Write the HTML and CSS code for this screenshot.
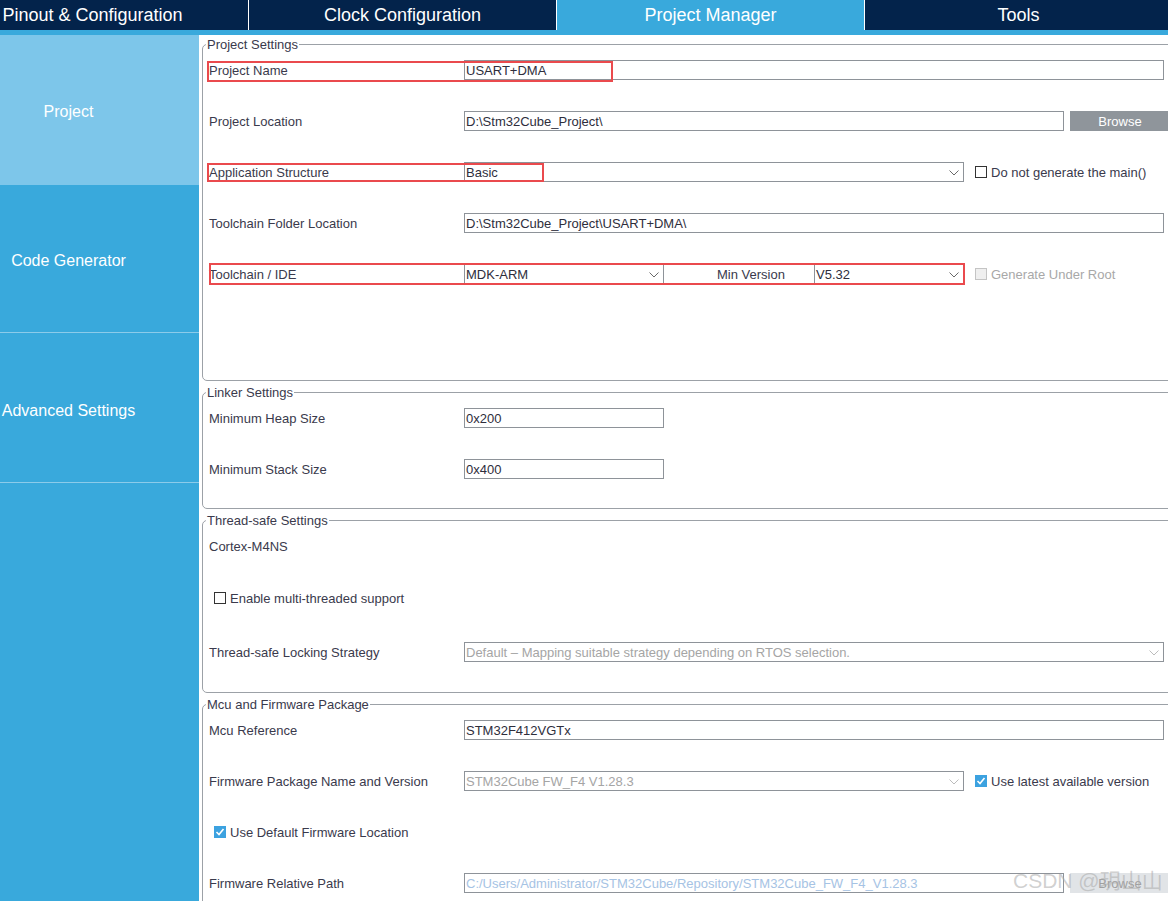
FILE: index.html
```html
<!doctype html>
<html>

<head>
	<meta charset="UTF-8">
	<title>Project Manager</title>
	<link rel="stylesheet" href="styles.css">
</head>

<body>

	<!-- top tabs -->
	<header class="tabs">
		<div class="tab first">Pinout &amp; Configuration</div>
		<div class="tab">Clock Configuration</div>
		<div class="tab active">Project Manager</div>
		<div class="tab">Tools</div>
	</header>

	<div class="layout">
		<!-- left menu -->
		<nav class="side">
			<div class="side-item current">Project</div>
			<div class="side-item gen">Code Generator</div>
			<div class="side-item adv">Advanced Settings</div>
		</nav>

		<main class="panel">

			<fieldset class="group g-project">
				<legend>Project Settings</legend>
				<div class="rows">
					<div class="row">
						<span class="label">Project Name</span>
						<span class="field w700">USART+DMA</span>
						<span class="mark mark-name"></span>
					</div>
					<div class="row">
						<span class="label">Project Location</span>
						<span class="field w600">D:\Stm32Cube_Project\</span>
						<span class="btn">Browse</span>
					</div>
					<div class="row">
						<span class="label">Application Structure</span>
						<span class="field select w500">Basic
							<svg class="chev" width="10" height="6" viewBox="0 0 10 6"><polyline points="0.5,0.5 5,5 9.5,0.5" /></svg>
						</span>
						<span class="opt"><span class="check"></span>Do not generate the main()</span>
						<span class="mark mark-app"></span>
					</div>
					<div class="row">
						<span class="label">Toolchain Folder Location</span>
						<span class="field w700">D:\Stm32Cube_Project\USART+DMA\</span>
					</div>
					<div class="row">
						<span class="label">Toolchain / IDE</span>
						<span class="field select w200">MDK-ARM
							<svg class="chev" width="10" height="6" viewBox="0 0 10 6"><polyline points="0.5,0.5 5,5 9.5,0.5" /></svg>
						</span>
						<span class="minver">Min Version</span>
						<span class="field select w150">V5.32
							<svg class="chev" width="10" height="6" viewBox="0 0 10 6"><polyline points="0.5,0.5 5,5 9.5,0.5" /></svg>
						</span>
						<span class="opt off"><span class="check"></span>Generate Under Root</span>
						<span class="mark mark-ide"></span>
					</div>
				</div>
			</fieldset>

			<fieldset class="group g-linker">
				<legend>Linker Settings</legend>
				<div class="rows">
					<div class="row">
						<span class="label">Minimum Heap Size</span>
						<span class="field w200">0x200</span>
					</div>
					<div class="row">
						<span class="label">Minimum Stack Size</span>
						<span class="field w200">0x400</span>
					</div>
				</div>
			</fieldset>

			<fieldset class="group g-thread">
				<legend>Thread-safe Settings</legend>
				<div class="rows">
					<div class="row">
						<span class="label">Cortex-M4NS</span>
					</div>
					<div class="row r-multi">
						<span class="opt first-opt"><span class="check"></span>Enable multi-threaded support</span>
					</div>
					<div class="row r-lock">
						<span class="label">Thread-safe Locking Strategy</span>
						<span class="field select w700 dis">Default – Mapping suitable strategy depending on RTOS selection.
							<svg class="chev light" width="10" height="6" viewBox="0 0 10 6"><polyline points="0.5,0.5 5,5 9.5,0.5" /></svg>
						</span>
					</div>
				</div>
			</fieldset>

			<fieldset class="group g-mcu">
				<legend>Mcu and Firmware Package</legend>
				<div class="rows">
					<div class="row">
						<span class="label">Mcu Reference</span>
						<span class="field w700">STM32F412VGTx</span>
					</div>
					<div class="row">
						<span class="label">Firmware Package Name and Version</span>
						<span class="field select w500 dis">STM32Cube FW_F4 V1.28.3
							<svg class="chev light" width="10" height="6" viewBox="0 0 10 6"><polyline points="0.5,0.5 5,5 9.5,0.5" /></svg>
						</span>
						<span class="opt"><span class="check on"><svg width="10" height="10" viewBox="0 0 10 10"><polyline points="1.5,5 4,7.5 8.5,2" /></svg></span>Use latest available version</span>
					</div>
					<div class="row">
						<span class="opt first-opt"><span class="check on"><svg width="10" height="10" viewBox="0 0 10 10"><polyline points="1.5,5 4,7.5 8.5,2" /></svg></span>Use Default Firmware Location</span>
					</div>
					<div class="row">
						<span class="label">Firmware Relative Path</span>
						<span class="field w600 path">C:/Users/Administrator/STM32Cube/Repository/STM32Cube_FW_F4_V1.28.3</span>
						<span class="btn btn-off">Browse</span>
					</div>
				</div>
			</fieldset>

		</main>
	</div>

	<div class="watermark">CSDN @玥山山</div>

</body>

</html>
```

FILE: styles.css
```css
body {
	margin: 0;
	padding: 0;
	width: 1168px;
	height: 901px;
	overflow: hidden;
	position: relative;
	background: #fff;
	font-family: "Liberation Sans", Arial, sans-serif;
	font-size: 13px;
	color: #3a3a4c;
}

/* tabs */
.tabs {
	display: flex;
	height: 30px;
	background: #03234b;
	border-bottom: 5px solid #39a9dc;
	overflow: hidden;
}

.tab {
	flex: none;
	width: 307px;
	border-right: 1px solid #fff;
	color: #fff;
	font-size: 18px;
	line-height: 31px;
	text-align: center;
	white-space: nowrap;
}

.tab.first {
	width: 311px;
	margin-left: -63px;
}

.tab.active {
	background: #39a9dc;
}

/* layout */
.layout {
	display: flex;
	height: 866px;
}

.side {
	flex: none;
	width: 199px;
	background: #39a9dc;
}

.side-item {
	display: flex;
	align-items: center;
	justify-content: center;
	box-sizing: border-box;
	padding: 5px 62px 0 0;
	color: #fff;
	font-size: 16px;
	white-space: nowrap;
	border-bottom: 1px solid #8ccbea;
}

.side-item.current {
	height: 150px;
	padding-top: 4px;
	background: #7dc6ea;
	border-bottom: none;
}

.gen {
	height: 148px;
}

.adv {
	height: 150px;
	padding-top: 7px;
}

.panel {
	flex: 1;
	padding: 2px 0 0 3px;
	overflow: hidden;
}

/* groups */
.group {
	margin: 0 -10px 4px 0;
	padding: 8px 0 0 0;
	border: 1px solid #9ca1a7;
	border-radius: 5px;
	min-width: 0;
}

.group legend {
	margin-left: 3px;
	padding: 0 1px;
	font-size: 13px;
	line-height: 15px;
	color: #3a3a4c;
}

.g-project {
	padding-bottom: 96px;
}

.g-linker {
	padding-bottom: 29px;
}

.g-thread {
	padding-bottom: 30px;
}

.g-mcu {
	padding-bottom: 40px;
}

.rows {
	display: flex;
	flex-direction: column;
	gap: 31px;
	padding-left: 6px;
}

.row {
	display: flex;
	align-items: center;
	height: 20px;
	position: relative;
	white-space: nowrap;
}

.r-multi {
	margin-top: 1px;
}

.r-lock {
	margin-top: 3px;
}

.label {
	flex: none;
	width: 255px;
}

.field {
	flex: none;
	box-sizing: border-box;
	height: 20px;
	border: 1px solid #8e9399;
	padding: 1px 1px 0;
	line-height: 18px;
	color: #2e2e3c;
	background: #fff;
	overflow: hidden;
	white-space: nowrap;
}

.w700 { width: 700px; }
.w600 { width: 600px; }
.w500 { width: 500px; }
.w200 { width: 200px; }
.w150 { width: 150px; }

.select {
	display: flex;
	align-items: center;
	justify-content: space-between;
	padding-right: 4px;
}

.chev {
	flex: none;
	fill: none;
	stroke: #6a6a6a;
	stroke-width: 1;
}

.chev.light {
	stroke: #bcbcbc;
}

.dis {
	color: #a5a5a5;
}

.path {
	color: #a6c3e4;
}

.minver {
	flex: none;
	box-sizing: border-box;
	width: 150px;
	padding-left: 53px;
}

.btn {
	flex: none;
	width: 100px;
	height: 20px;
	margin-left: 6px;
	background: #8f959b;
	color: #fff;
	text-align: center;
	line-height: 21px;
}

.btn-off {
	background: #e1e4e7;
	color: #a0a0a0;
}

/* checkboxes */
.opt {
	display: flex;
	align-items: center;
	margin-left: 11px;
}

.first-opt {
	margin-left: 5px;
}

.check {
	flex: none;
	display: flex;
	align-items: center;
	justify-content: center;
	box-sizing: border-box;
	width: 12px;
	height: 12px;
	margin-right: 4px;
	border: 1px solid #333;
	background: #fff;
}

.check.on {
	background: #3ca2e0;
	border-color: #3ca2e0;
}

.check svg {
	fill: none;
	stroke: #fff;
	stroke-width: 1.6;
}

.opt.off {
	color: #a8a8a8;
}

.opt.off .check {
	background: #efefef;
	border-color: #c4c4c4;
}

/* red marks over the screenshot */
.mark {
	position: absolute;
	box-sizing: border-box;
	border: 2px solid #ea4a4d;
}

.mark-name {
	left: -2px;
	top: 1px;
	width: 406px;
	height: 21px;
}

.mark-app {
	left: -2px;
	top: 1px;
	width: 337px;
	height: 19px;
}

.mark-ide {
	left: 0;
	top: -1px;
	width: 756px;
	height: 22px;
}

.watermark {
	position: absolute;
	left: 1013px;
	top: 868px;
	font-family: "Liberation Sans", "Noto Sans CJK SC", sans-serif;
	font-size: 21px;
	line-height: 26px;
	color: rgba(170, 170, 170, .55);
	white-space: nowrap;
}
```
